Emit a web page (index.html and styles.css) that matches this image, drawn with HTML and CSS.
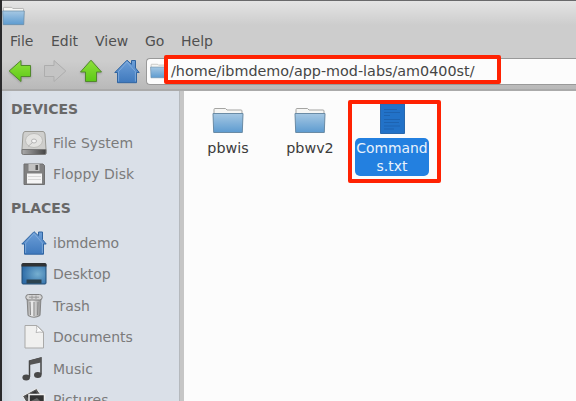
FILE: index.html
```
<!DOCTYPE html>
<html lang="en">
<head>
<meta charset="utf-8">
<title>File Manager</title>
<link rel="stylesheet" href="styles.css">
</head>
<body>
<svg class="defs" width="0" height="0" aria-hidden="true">
  <defs>
    <linearGradient id="blue" x2="0" y2="1"><stop stop-color="#a6c8e3"/><stop offset="1" stop-color="#5d9bd0"/></linearGradient>
    <linearGradient id="green" x2="0" y2="1"><stop stop-color="#8fe03c"/><stop offset="1" stop-color="#5cc916"/></linearGradient>
    <linearGradient id="greenup" x2="1" y2="0"><stop stop-color="#8fe03c"/><stop offset="1" stop-color="#5cc916"/></linearGradient>
    <linearGradient id="home" x2="0" y2="1"><stop stop-color="#6d9fd8"/><stop offset="1" stop-color="#3f79bd"/></linearGradient>
    <linearGradient id="metal" x2="1" y2="0"><stop stop-color="#999"/><stop offset=".35" stop-color="#eee"/><stop offset="1" stop-color="#909090"/></linearGradient>
    <linearGradient id="dark" x2="1" y2="0"><stop stop-color="#aaa"/><stop offset="1" stop-color="#444"/></linearGradient>
    <radialGradient id="screen" cx=".65" cy=".5" r=".65"><stop stop-color="#76afd0"/><stop offset="1" stop-color="#2f6da8"/></radialGradient>
    <symbol id="folder" viewBox="0 0 32 27">
      <path d="M2 13V2.500Q2 1.500 3 1.500H13.500L15 3H29Q30 3 30 4V13Z" fill="#f6f6f4" stroke="#a5a5a3"/>
      <path d="M1 6.500H31L30.300 25.500H1.700Z" fill="url(#blue)" stroke="#6a8ba5"/>
    </symbol>
    <symbol id="house" viewBox="0 0 26 25">
      <path d="M13 1.200L17.500 5.300V1.500H21.500V9L25.200 13.500H22.500V23.700H3.500V13.500H.8Z" fill="url(#home)" stroke="#3064a0"/>
      <path d="M4.600 22.500V12.500L13 3L21.400 12.500V22.500" fill="none" stroke="#86aedc" stroke-width=".8"/>
    </symbol>
    <symbol id="arrow" viewBox="0 0 24 24">
      <path d="M1.200 12L13 1.500V6.500H22.500V17.500H13V22.500Z"/>
    </symbol>
  </defs>
</svg>
<div class="window">
  <header class="chrome">
    <div class="title"><svg class="title-folder"><use href="#folder"/></svg></div>
    <nav class="menu"><span>File</span><span>Edit</span><span>View</span><span>Go</span><span>Help</span></nav>
    <div class="toolbar">
      <svg class="nav-arrow back"><use href="#arrow"/></svg>
      <svg class="nav-arrow forward"><use href="#arrow"/></svg>
      <svg class="nav-arrow up"><use href="#arrow"/></svg>
      <svg class="nav-home"><use href="#house"/></svg>
      <div class="address"><svg class="address-folder"><use href="#folder"/></svg><span>/home/ibmdemo/app-mod-labs/am0400st/</span></div>
    </div>
  </header>
  <main class="body">
    <aside class="sidebar">
      <h2>DEVICES</h2>
      <ul>
        <li><svg viewBox="0 0 26 26"><path d="M4 1.500H22Q23.500 1.500 24 4L25 19V24H1V19L2 4Q2.500 1.500 4 1.500Z" fill="#cfcfcd" stroke="#999994"/><path d="M1 19.500H25V23Q25 24.500 23.500 24.500H2.500Q1 24.500 1 23Z" fill="url(#dark)" stroke="#777"/><ellipse cx="13" cy="10.500" rx="8.500" ry="7" fill="#e3e3e1" stroke="#bdbdba"/><ellipse cx="13" cy="11" rx="2.500" ry="2" fill="#f5f5f5" stroke="#b5b5b5"/><path d="M12 12L7 16.500" stroke="#b5b5b5"/></svg><span>File System</span></li>
        <li><svg viewBox="0 0 26 26"><path d="M3 3H22L23.500 4.500V23.500H3Z" fill="#808080" stroke="#707070"/><path d="M7.500 3H18.500V10H7.500Z" fill="#c2c2c2"/><path d="M14.500 4H17V9H14.500Z" fill="#555"/><path d="M6 12.500H21V22.500H6Z" fill="#f5f5f5"/><path d="M7 15.500H20M7 18.500H20" stroke="#d8d8d8"/></svg><span>Floppy Disk</span></li>
      </ul>
      <h2 class="places">PLACES</h2>
      <ul>
        <li><svg viewBox="0 0 26 26"><use href="#house" width="26" height="25" y=".5"/></svg><span>ibmdemo</span></li>
        <li><svg viewBox="0 0 26 26"><rect x="1" y="3" width="24" height="20" rx="1" fill="url(#screen)" stroke="#234f77"/><path d="M.5 5.500V3.500Q.5 2 2 2H24Q25.500 2 25.500 3.500V5.500Z" fill="#303335"/><path d="M5.500 18.500H20.500V22.500H5.500Z" fill="#2c4350"/></svg><span>Desktop</span></li>
        <li><svg viewBox="0 0 26 26"><path d="M6 4H20L19 22.500Q13 26 7 22.500Z" fill="url(#metal)" stroke="#858585"/><path d="M9 9L9.500 22M13 9V23M17 9L16.500 22" stroke="#888"/><rect x="4.800" y="1.500" width="16.400" height="5.500" rx="2.700" fill="#d4d4d4" stroke="#808080"/><path d="M8 4.200H18M11 2.500V6M15 2.500V6" stroke="#999"/></svg><span>Trash</span></li>
        <li><svg viewBox="0 0 26 26"><path d="M4 1.500H16L22.500 8V24H4Z" fill="#f0f0ef" stroke="#a9a9a8"/><path d="M15.500 1.500Q16.500 6 15 8.500Q19 7.500 22.500 8.500Z" fill="#fff" stroke="#aaa" stroke-width=".8"/></svg><span>Documents</span></li>
        <li><svg viewBox="0 0 26 26"><path d="M8.500 21V5L20 2V18.500" fill="none" stroke="#444" stroke-width="1.500"/><path d="M8.500 4.500L20 1.500V6.500L8.500 9Z" fill="#555"/><ellipse cx="5.200" cy="21.500" rx="3.800" ry="3" fill="#494949"/><ellipse cx="16.800" cy="19" rx="3.800" ry="3" fill="#494949"/></svg><span>Music</span></li>
        <li><svg viewBox="0 0 26 26"><path d="M1.500 9L15.500 1.500L20 8V20H8Z" fill="#555" stroke="#eee"/><path d="M5 9L14.500 4L17 8H9V13Z" fill="#343434"/><path d="M8 7.500H23.500V20H8Z" fill="#333" stroke="#eee" stroke-width="1.500"/><path d="M10 14L16 11L22 17V19H10Z" fill="#686868"/></svg><span>Pictures</span></li>
      </ul>
    </aside>
    <div class="splitter"></div>
    <section class="files">
      <div class="file"><svg class="file-folder"><use href="#folder"/></svg><span>pbwis</span></div>
      <div class="file"><svg class="file-folder"><use href="#folder"/></svg><span>pbwv2</span></div>
      <div class="file selected"><svg class="doc" viewBox="0 0 25 30"><path d="M.5 0H24.500V29.500H.5Z" fill="#2272c8" stroke="#2a68ac"/><path d="M4 5.500H17M4 8.500H20M4 11.500H10M4 15.500H20M4 18.500H19M4 22H20M4 25H14" stroke="#1d63b1"/></svg><span>Command<br>s.txt</span></div>
    </section>
  </main>
  <div class="mark mark-path"></div>
  <div class="mark mark-file"></div>
</div>
</body>
</html>
```
FILE: styles.css
```
* { box-sizing: border-box; }
body { margin: 0; overflow: hidden; font-family: "DejaVu Sans", sans-serif; font-size: 14px; color: #505050; }
svg { display: block; flex: none; overflow: visible; }
.defs { position: absolute; }
.window { position: relative; width: 576px; height: 401px; overflow: hidden; border-left: 2px solid #29292b; background: #fcfcfc; display: flex; flex-direction: column; }
.chrome { flex: none; height: 91px; border-top: 1px solid #69696b; border-bottom: 2px solid #aaa; background: linear-gradient(#e4e4e4 0, #cdcdcd 24px, #cdcdcd 60px, #b9b9b9 100%); }
.title { height: 28px; padding-top: 5px; }
.title-folder { width: 23px; height: 20px; }
.menu { display: flex; height: 25px; line-height: 25px; padding-left: 8px; }
.menu span { white-space: nowrap; }
.menu span:nth-child(1) { width: 41px; }
.menu span:nth-child(2) { width: 44px; }
.menu span:nth-child(3) { width: 50px; }
.menu span:nth-child(4) { width: 36px; }
.toolbar { display: flex; align-items: center; height: 34px; padding-left: 6px; }
.nav-arrow { width: 24px; height: 24px; margin-right: 11px; fill: url(#green); stroke: #51892c; filter: drop-shadow(0 1px 1px #999); }
.forward { transform: scaleX(-1); fill: #c4c4c4; stroke: #adadad; filter: none; }
.up { transform: rotate(90deg); margin-left: 1px; fill: url(#greenup); filter: drop-shadow(1px 0 1px #999); }
.nav-home { width: 26px; height: 25px; }
.address { display: flex; align-items: center; flex: 1; height: 27px; margin-left: 6px; border: 1px solid #999; border-right: 0; border-radius: 4px 0 0 4px; background: #fcfcfc; font-size: 14.35px; color: #454545; white-space: nowrap; }
.address-folder { width: 18px; height: 16px; margin: 0 3px 0 3px; }
.body { display: flex; flex: 1; min-height: 0; }
.sidebar { width: 177px; overflow: hidden; background: linear-gradient(90deg, #cfd6df, #dae0e8 10px); padding-top: 6px; color: #7b7b7b; }
.sidebar h2 { margin: 0; padding-left: 9px; font-size: 14px; line-height: 25px; height: 30px; color: #686868; }
.sidebar .places { height: 31px; margin-top: 6px; }
.sidebar ul { list-style: none; margin: 0; padding: 0; }
.sidebar li { display: flex; align-items: center; gap: 6px; height: 31.5px; padding-left: 19px; white-space: nowrap; }
.sidebar li svg { width: 26px; height: 26px; }
.splitter { width: 5px; background: #c6c6c6; border-left: 1px solid #b5b9bd; }
.files { display: flex; flex: 1; padding-left: 3px; font-size: 14.3px; color: #3b3b3b; }
.file { display: flex; flex-direction: column; align-items: center; width: 82px; padding-top: 16px; }
.file-folder { width: 32px; height: 27px; margin-bottom: 6px; }
.file.selected { padding-top: 13px; }
.doc { width: 25px; height: 30px; margin-bottom: 4px; }
.selected span { width: 74px; height: 38px; padding-top: 1px; border-radius: 5px; background: #2380e0; color: #e9f2fc; font-size: 13.9px; line-height: 18px; text-align: center; }
.mark { position: absolute; border: 4px solid #ff2202; border-radius: 2px; }
.mark-path { left: 162px; top: 55px; width: 337px; height: 29px; }
.mark-file { left: 346px; top: 100px; width: 93px; height: 83px; }
```
